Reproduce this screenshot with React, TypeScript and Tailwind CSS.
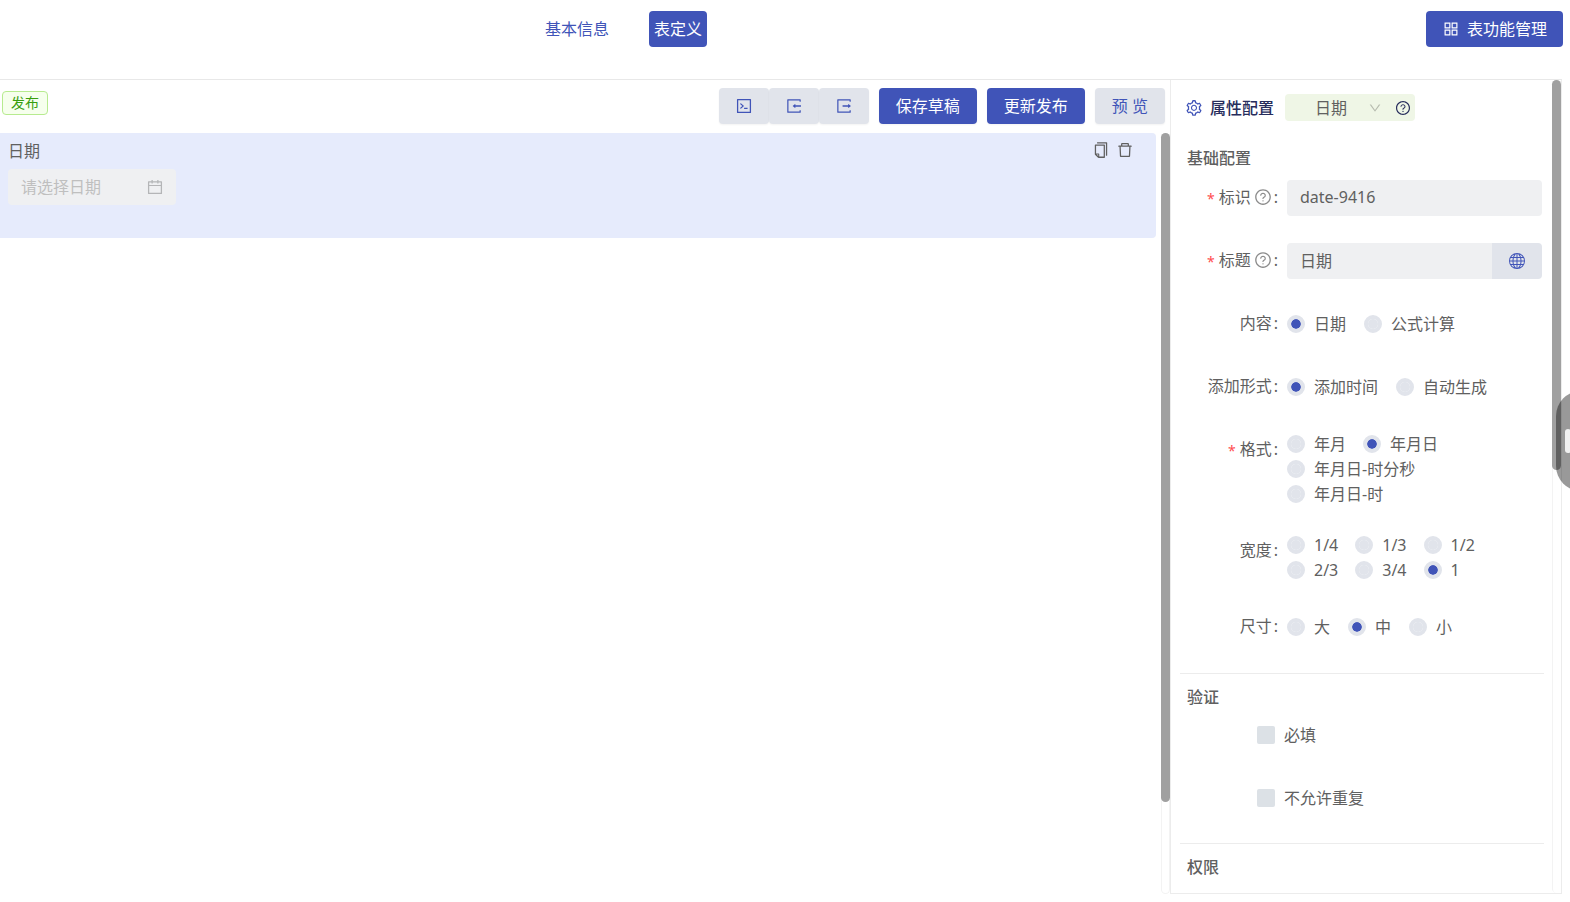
import React from "react";
import type { ReactNode } from "react";
import {
  AiOutlineAppstore,
  AiOutlineCalendar,
  AiOutlineCode,
  AiOutlineCopy,
  AiOutlineDelete,
  AiOutlineDown,
  AiOutlineQuestionCircle,
  AiOutlineSetting,
} from "react-icons/ai";
import { BsGlobe } from "react-icons/bs";

const OPEN_BOX =
  "M888.3 757.4h-53.8c-4.2 0-7.7 3.5-7.7 7.7v61.8H197.1V197.1h629.8v61.8c0 4.2 3.5 7.7 7.7 7.7h53.8c4.2 0 7.7-3.4 7.7-7.7V158.7c0-17-13.7-30.7-30.7-30.7H158.7c-17 0-30.7 13.7-30.7 30.7v706.6c0 17 13.7 30.7 30.7 30.7h706.6c17 0 30.7-13.7 30.7-30.7V765.1c0-4.3-3.5-7.7-7.7-7.7z";

function ImportIcon() {
  return (
    <svg viewBox="0 0 1024 1024" fill="currentColor" className="size-[18px]" aria-hidden="true">
      <path d={OPEN_BOX} />
      <path d="M902 476H588v-76c0-6.7-7.8-10.5-13-6.3l-141.9 112a8 8 0 0 0 0 12.6l141.9 112c5.3 4.2 13 .4 13-6.3v-76h314c4.4 0 8-3.6 8-8v-56c0-4.4-3.6-8-8-8z" />
    </svg>
  );
}

function ExportIcon() {
  return (
    <svg viewBox="0 0 1024 1024" fill="currentColor" className="size-[18px]" aria-hidden="true">
      <path d={OPEN_BOX} />
      <path d="M906.9 505.7L765 393.7c-5.3-4.2-13-.4-13 6.3v76H438c-4.4 0-8 3.6-8 8v56c0 4.4 3.6 8 8 8h314v76c0 6.7 7.8 10.5 13 6.3l141.9-112a8 8 0 0 0 0-12.6z" />
    </svg>
  );
}

function Field({
  label,
  required,
  help,
  htmlFor,
  children,
}: {
  label: string;
  required?: boolean;
  help?: boolean;
  htmlFor?: string;
  children: ReactNode;
}) {
  const content = (
    <>
      {required && <span className="mr-1 pt-1 text-sm leading-none text-[#ff4d4f]">*</span>}
      {label}
      {help && <AiOutlineQuestionCircle className="ml-[3px] size-[18px] text-[#8c8c8c]" />}
      <span className="ml-0.5">:</span>
    </>
  );
  const labelClass = "flex h-9 w-[98px] shrink-0 items-center justify-end pb-0.5";
  return (
    <div className="mb-[27px] flex items-start gap-[9px]">
      {htmlFor ? (
        <label htmlFor={htmlFor} className={labelClass}>
          {content}
        </label>
      ) : (
        <span className={labelClass}>{content}</span>
      )}
      <div className="min-w-0 flex-1">{children}</div>
    </div>
  );
}

function Radios({
  name,
  options,
  value,
  tall,
}: {
  name: string;
  options: string[];
  value: string;
  tall?: boolean;
}) {
  return (
    <div
      role="radiogroup"
      aria-label={name}
      className={
        tall
          ? "flex min-h-9 flex-wrap content-start gap-x-[17px] gap-y-px pr-4"
          : "flex min-h-9 flex-wrap items-center gap-x-[18px] gap-y-px"
      }
    >
      {options.map((option) => (
        <label key={option} className="flex h-6 items-center gap-[9px] whitespace-nowrap">
          <input
            type="radio"
            name={name}
            defaultChecked={option === value}
            className="size-[18px] appearance-none rounded-full border-4 border-[#e1e4eb] bg-[#e1e4eb] bg-clip-padding checked:bg-[#4054b8]"
          />
          {option}
        </label>
      ))}
    </div>
  );
}

function Check({ label }: { label: string }) {
  return (
    <label className="mb-[27px] ml-[77px] flex h-9 items-center gap-[9px]">
      <input
        type="checkbox"
        className="size-[18px] appearance-none rounded-xs bg-[#dce1e6] checked:bg-[#4054b8]"
      />
      {label}
    </label>
  );
}

function ToolButton({ label, children }: { label: string; children: ReactNode }) {
  return (
    <button
      type="button"
      aria-label={label}
      className="flex h-9 w-[50px] items-center justify-center rounded bg-[#e1e4eb] text-[#4054b8] shadow-xs"
    >
      {children}
    </button>
  );
}

export default function App() {
  return (
    <div className="relative flex h-screen flex-col overflow-hidden bg-white pb-2 font-['Noto_Sans','Noto_Sans_CJK_SC',sans-serif] text-base leading-6 text-[#606060]">
      <header className="grid h-[79px] shrink-0 grid-cols-[1fr_auto_1fr] items-start pt-[11px] pr-[7px]">
        <nav className="col-start-2 flex h-9 items-center gap-[35px] pr-[316px]">
          <a href="#info" className="px-[5px] text-[#4054b8]">
            基本信息
          </a>
          <a href="#table" className="flex h-9 items-center rounded bg-[#4054b8] px-[5px] text-white">
            表定义
          </a>
        </nav>
        <button
          type="button"
          className="flex h-9 items-center gap-[7px] justify-self-end rounded bg-[#4054b8] px-4 text-white"
        >
          <AiOutlineAppstore className="size-[18px]" />
          表功能管理
        </button>
      </header>

      <div className="mr-2 flex min-h-0 flex-1 border-t border-[#e8e8e8]">
        <main className="flex min-w-0 flex-1 flex-col">
          <div className="flex h-[53px] shrink-0 items-start justify-between pt-2 pr-[5px] pl-0.5">
            <span className="mt-[3px] flex h-6 items-center rounded border border-[#b7eb8f] bg-[#f6ffed] px-2 text-sm text-[#389e0d]">
              发布
            </span>
            <div className="flex gap-2.5">
              <div className="flex">
                <ToolButton label="脚本">
                  <AiOutlineCode className="size-[18px]" />
                </ToolButton>
                <ToolButton label="导入">
                  <ImportIcon />
                </ToolButton>
                <ToolButton label="导出">
                  <ExportIcon />
                </ToolButton>
              </div>
              <button type="button" className="h-9 rounded bg-[#4054b8] px-[17px] text-white shadow-xs">
                保存草稿
              </button>
              <button type="button" className="h-9 rounded bg-[#4054b8] px-[17px] text-white shadow-xs">
                更新发布
              </button>
              <button type="button" className="h-9 rounded bg-[#e1e4eb] px-[17px] text-[#4054b8] shadow-xs">
                预 览
              </button>
            </div>
          </div>
          <div className="flex min-h-0 flex-1 gap-[5px]">
            <div className="min-w-0 flex-1">
              <section className="flex h-[105px] items-start justify-between rounded-r bg-[#e6ebfc] pt-1.5 pr-[22px] pl-2">
                <div>
                  <label htmlFor="date" className="block">
                    日期
                  </label>
                  <div className="mt-1.5 flex h-9 w-[168px] items-center rounded bg-[#eff0f2] pr-3 pl-[13px]">
                    <input
                      id="date"
                      placeholder="请选择日期"
                      className="min-w-0 flex-1 bg-transparent outline-none placeholder:text-[#bfbfbf]"
                    />
                    <AiOutlineCalendar className="size-[18px] text-[#b4b5b7]" />
                  </div>
                </div>
                <div className="flex gap-1.5 pt-0.5">
                  <button type="button" aria-label="复制">
                    <AiOutlineCopy className="size-[18px]" />
                  </button>
                  <button type="button" aria-label="删除">
                    <AiOutlineDelete className="size-[18px]" />
                  </button>
                </div>
              </section>
            </div>
            <div className="w-[9px] rounded-full border border-t-0 border-[#f3f3f3]">
              <div className="-mx-px h-[88%] rounded-full bg-[#a0a0a0]" />
            </div>
          </div>
        </main>

        <aside className="flex w-[392px] shrink-0 border-x border-b border-[#ececec]">
          <div className="min-w-0 flex-1 overflow-hidden pl-[9px]">
            <div className="mt-3.5 flex h-[27px] items-center pl-[5px]">
              <AiOutlineSetting className="size-[18px] text-[#4054b8]" />
              <h2 className="ml-[7px] font-medium text-[#272d5c]">属性配置</h2>
              <div className="ml-[11px] flex h-[27px] items-center rounded bg-[#eff6e6] pr-1 pl-[30px]">
                <div className="relative flex items-center">
                  <select aria-label="类型" className="w-[67px] appearance-none bg-transparent outline-none">
                    <option>日期</option>
                  </select>
                  <AiOutlineDown className="pointer-events-none absolute right-0 size-3.5 text-[#b6bbae]" />
                </div>
                <AiOutlineQuestionCircle className="ml-[13px] size-4 text-[#272d5c]" />
              </div>
            </div>

            <h3 className="mt-[25px] mb-2.5 pl-[7px] font-medium">基础配置</h3>
            <div className="pr-2.5 pb-px">
              <Field label="标识" required help htmlFor="key">
                <input
                  id="key"
                  defaultValue="date-9416"
                  className="block h-9 w-full rounded bg-[#eff0f2] px-[13px] pb-0.5 outline-none"
                />
              </Field>
              <Field label="标题" required help htmlFor="title">
                <div className="flex">
                  <input
                    id="title"
                    defaultValue="日期"
                    className="h-9 min-w-0 flex-1 rounded-l bg-[#eff0f2] px-[13px] pb-0.5 outline-none"
                  />
                  <button
                    type="button"
                    aria-label="多语言"
                    className="flex h-9 w-[50px] items-center justify-center rounded-r bg-[#e1e4eb] text-[#4054b8]"
                  >
                    <BsGlobe className="size-4" />
                  </button>
                </div>
              </Field>
              <Field label="内容">
                <Radios name="内容" options={["日期", "公式计算"]} value="日期" />
              </Field>
              <Field label="添加形式">
                <Radios name="添加形式" options={["添加时间", "自动生成"]} value="添加时间" />
              </Field>
              <Field label="格式" required>
                <Radios
                  name="格式"
                  options={["年月", "年月日", "年月日-时分秒", "年月日-时"]}
                  value="年月日"
                  tall
                />
              </Field>
              <Field label="宽度">
                <Radios name="宽度" options={["1/4", "1/3", "1/2", "2/3", "3/4", "1"]} value="1" tall />
              </Field>
              <Field label="尺寸">
                <Radios name="尺寸" options={["大", "中", "小"]} value="中" />
              </Field>
            </div>

            <section className="mr-2 border-t border-[#ececec] pt-[11px]">
              <h3 className="mb-2 pl-[7px] font-medium">验证</h3>
              <Check label="必填" />
              <Check label="不允许重复" />
            </section>
            <section className="mr-2 border-t border-[#ececec] pt-[11px]">
              <h3 className="pl-[7px] font-medium">权限</h3>
            </section>
          </div>
          <div className="w-[9px] rounded-full border-l border-[#f3f3f3]">
            <div className="-ml-px h-[48%] rounded-full bg-[#a0a0a0]" />
          </div>
        </aside>
      </div>

      <button
        type="button"
        aria-label="展开"
        className="absolute top-[391px] -right-9 flex h-[100px] w-[50px] items-center rounded-full bg-black/40 pl-[9px]"
      >
        <span className="h-6 w-1.5 rounded-full bg-white/85" />
      </button>
    </div>
  );
}
